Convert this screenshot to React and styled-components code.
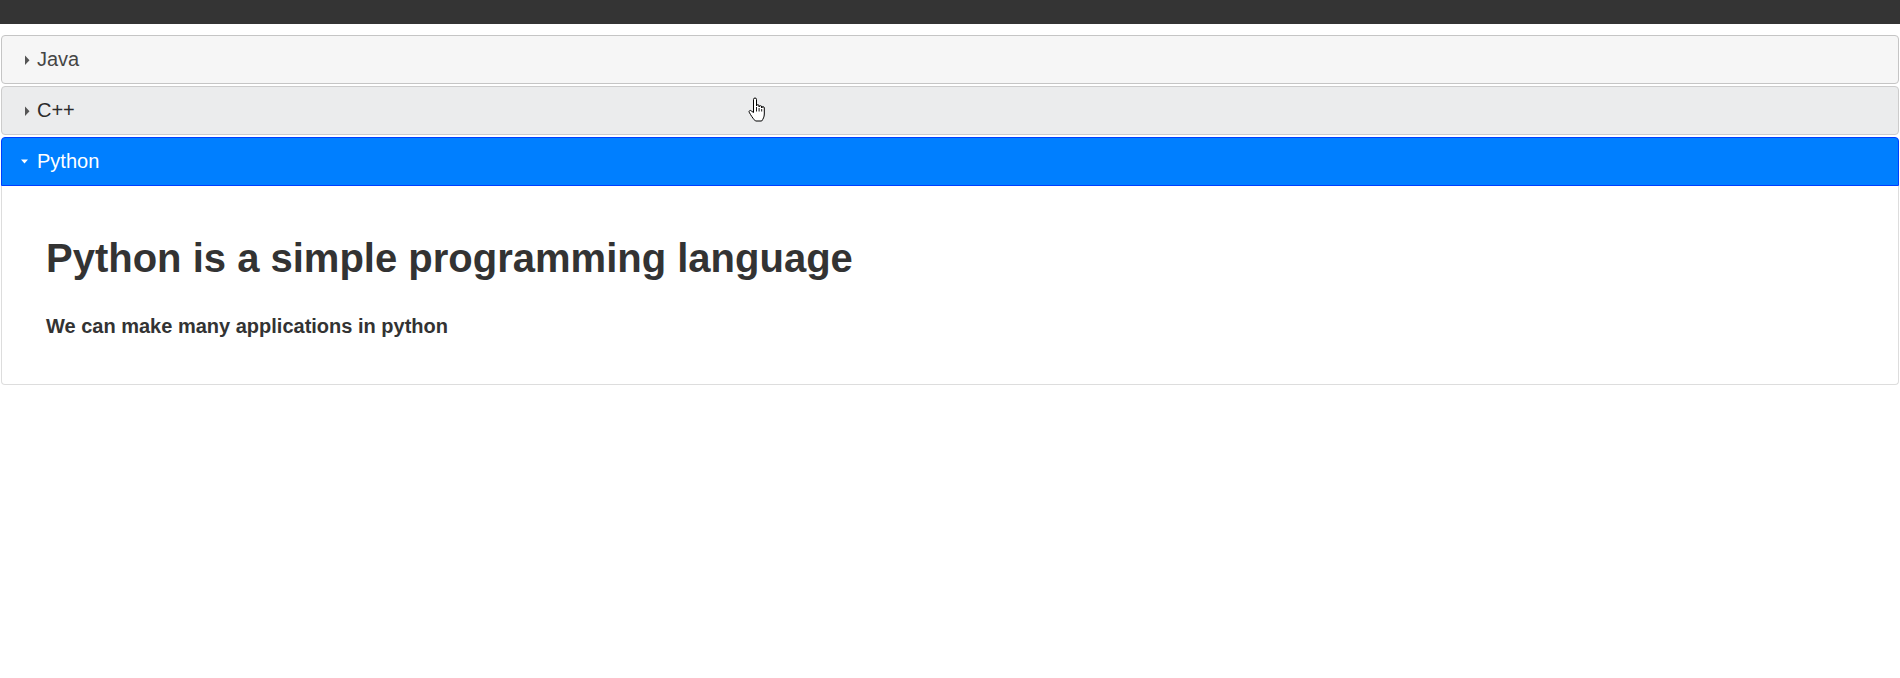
import React, { useState } from "react";
import styled, { createGlobalStyle, css } from "styled-components";

const GlobalStyle = createGlobalStyle`
  html, body {
    margin: 0;
    padding: 0;
    background: #ffffff;
  }
  body {
    font-family: "Liberation Sans", Arial, Helvetica, sans-serif;
  }
`;

const Page = styled.div`
  position: relative;
  min-height: 678px;
`;

const TopBar = styled.div`
  height: 24px;
  background-color: #343434;
`;

const Accordion = styled.div`
  display: flex;
  flex-direction: column;
  margin: 9px 1px 0 1px;
`;

const Header = styled.div`
  display: flex;
  align-items: center;
  gap: 2px;
  box-sizing: border-box;
  height: 49px;
  margin-top: 2px;
  padding-left: 13px;
  font-size: 20px;
  border: 1px solid #c5c5c5;
  border-radius: 4px;
  background-color: #f6f6f6;
  color: #454545;
  cursor: pointer;

  ${(p) =>
    p.$hover &&
    css`
      background-color: #ebeced;
      border-color: #cccccc;
      color: #2b2b2b;
    `}

  ${(p) =>
    p.$active &&
    css`
      background-color: #007fff;
      border-color: #003eff;
      color: #ffffff;
      border-radius: 4px 4px 0 0;
    `}
`;

const IconBox = styled.span`
  display: block;
  width: 20px;
  height: 20px;
  flex-shrink: 0;
`;

const Content = styled.div`
  box-sizing: border-box;
  height: 199px;
  padding: 20px 44px;
  border: 1px solid #dddddd;
  border-top: 0;
  border-radius: 0 0 4px 4px;
  background-color: #ffffff;
  color: #333333;
  overflow: hidden;
`;

const Title = styled.h1`
  font-size: 40px;
  font-weight: bold;
  line-height: 46px;
  margin: 29px 0 34px 0;
`;

const Subtitle = styled.h4`
  font-size: 20px;
  font-weight: bold;
  line-height: 23px;
  margin: 0;
`;

const Cursor = styled.svg`
  position: absolute;
  left: 748px;
  top: 97px;
  pointer-events: none;
`;

const Triangle = ({ open }) => (
  <IconBox>
    <svg width="20" height="20" viewBox="0 0 20 20">
      {open ? (
        <polygon points="6,7.5 13,7.5 9.5,11.5" fill="#ffffff" />
      ) : (
        <polygon points="10,5.5 14.5,10.2 10,15" fill="#555555" />
      )}
    </svg>
  </IconBox>
);

const HandCursor = () => (
  <Cursor width="20" height="26" viewBox="0 0 20 26">
    <path
      d="M5.5 2.5 a1.5 1.5 0 0 1 3 0 V9 a1.3 1.3 0 0 1 2.6 0 V10 a1.3 1.3 0 0 1 2.6 0 V11 a1.3 1.3 0 0 1 2.6 0 V17 c0 3 -1.2 5 -2.6 7 H7.5 c-1.6 -1.5 -3.2 -3.5 -5 -6.5 l-1.3 -2.3 a1.2 1.2 0 0 1 2 -1.3 L5.5 15.5 Z"
      fill="#ffffff"
      stroke="#000000"
      strokeWidth="1"
      strokeLinejoin="round"
    />
    <path d="M8.5 10v4.5 M11.1 11v3.5 M13.7 12v2.5" stroke="#000000" strokeWidth="0.9" />
  </Cursor>
);

const sections = [
  { id: "java", label: "Java" },
  { id: "cpp", label: "C++" },
  {
    id: "python",
    label: "Python",
    title: "Python is a simple programming language",
    text: "We can make many applications in python",
  },
];

const App = () => {
  const [active, setActive] = useState("python");
  const [hover, setHover] = useState("cpp");

  return (
    <>
      <GlobalStyle />
      <Page>
        <TopBar />
        <Accordion>
          {sections.map((s) => (
            <React.Fragment key={s.id}>
              <Header
                $active={active === s.id}
                $hover={hover === s.id && active !== s.id}
                onClick={() => setActive(s.id)}
                onMouseEnter={() => setHover(s.id)}
              >
                <Triangle open={active === s.id} />
                <span>{s.label}</span>
              </Header>
              {active === s.id && (
                <Content>
                  <Title>{s.title || s.label}</Title>
                  <Subtitle>{s.text || ""}</Subtitle>
                </Content>
              )}
            </React.Fragment>
          ))}
        </Accordion>
        <HandCursor />
      </Page>
    </>
  );
};

export default App;
